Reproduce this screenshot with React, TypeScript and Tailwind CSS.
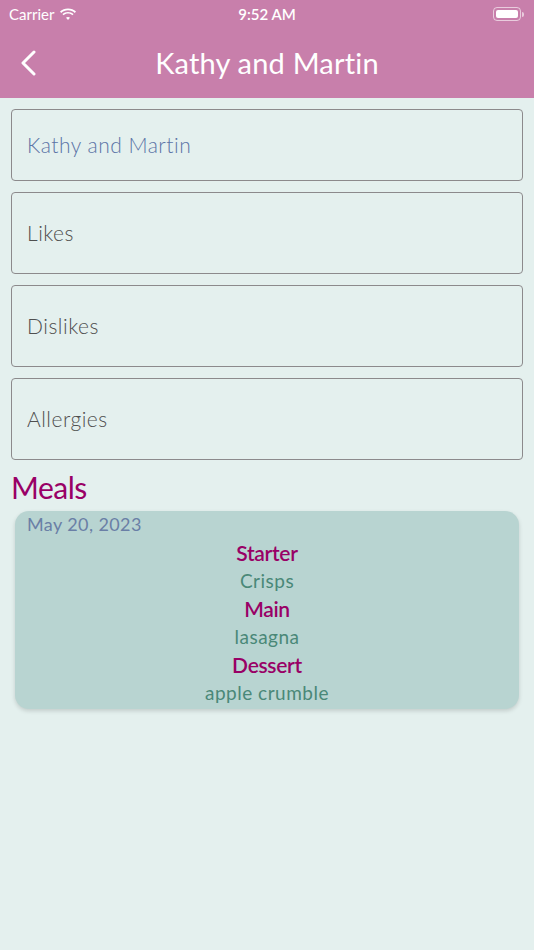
import React from "react";

const fields = [
  { label: "Kathy and Martin", tone: "text-[#5b74a6]", h: "h-[72px]" },
  { label: "Likes", tone: "text-[#4f4f4f]", h: "h-[82px]" },
  { label: "Dislikes", tone: "text-[#4f4f4f]", h: "h-[82px]" },
  { label: "Allergies", tone: "text-[#4f4f4f]", h: "h-[82px]" },
];

const courses = [
  { name: "Starter", dish: "Crisps" },
  { name: "Main", dish: "lasagna" },
  { name: "Dessert", dish: "apple crumble" },
];

function StatusBar() {
  return (
    <div className="h-[28px] flex items-center justify-between px-[9px] text-white">
      <div className="flex items-center gap-[5px] w-[120px]">
        <span className="text-[15px]">Carrier</span>
        <svg width="18" height="13" viewBox="0 0 18 13" fill="white">
          <path d="M9 2.2c2.6 0 5 1 6.8 2.7l1.2-1.3C14.9 1.6 12.1.5 9 .5S3.1 1.6 1 3.6l1.2 1.3C4 3.2 6.4 2.2 9 2.2z" />
          <path d="M9 5.6c1.7 0 3.2.6 4.4 1.7l1.2-1.3C13.1 4.6 11.1 3.9 9 3.9S4.9 4.6 3.4 6l1.2 1.3C5.8 6.2 7.3 5.6 9 5.6z" />
          <path d="M9 9c.8 0 1.5.3 2 .8L9 12 7 9.8c.5-.5 1.2-.8 2-.8z" />
        </svg>
      </div>
      <span className="text-[15px] font-semibold">9:52 AM</span>
      <div className="w-[120px] flex justify-end pr-[1px]">
        <div className="flex items-center">
          <div className="w-[28px] h-[14px] rounded-[4px] border border-white/60 p-[2px]">
            <div className="w-full h-full bg-white rounded-[2px]" />
          </div>
          <div className="w-[2px] h-[5px] bg-white/60 rounded-r-sm ml-[1px]" />
        </div>
      </div>
    </div>
  );
}

export default function App() {
  return (
    <div className="w-[534px] h-[950px] bg-[#e4f0ee] font-['Lato',sans-serif] flex flex-col">
      <div className="bg-[#c87fab]">
        <StatusBar />
        <div className="h-[70px] flex items-center relative">
          <svg className="absolute left-[19px] top-[22px]" width="18" height="26" viewBox="0 0 18 26" fill="none">
            <path d="M15 2 L4 13 L15 24" stroke="white" strokeWidth="3" strokeLinecap="round" strokeLinejoin="round" />
          </svg>
          <h1 className="w-full text-center text-white text-[29px] tracking-[0.2px] -mt-[1px]">Kathy and Martin</h1>
        </div>
      </div>

      <div className="px-[11px] pt-[11px] flex flex-col gap-[11px]">
        {fields.map((f) => (
          <div
            key={f.label}
            className={`${f.h} border border-[#8c8a8c] rounded-[4px] flex items-center px-[15px]`}
          >
            <span className={`${f.tone} text-[21px] font-light tracking-[0.5px]`}>{f.label}</span>
          </div>
        ))}
      </div>

      <h2 className="px-[11px] mt-[9px] text-[30px] leading-[36px] text-[#990066] tracking-[-0.5px]">Meals</h2>

      <div className="mx-[15px] mt-[6px] bg-[#b8d4d1] rounded-[14px] shadow-[0_2px_4px_rgba(0,0,0,0.15)] pt-[2px] pb-[2px]">
        <div className="px-[12px] text-[18px] leading-[22px] text-[#6a7fa6] tracking-[0.4px]">May 20, 2023</div>
        <div className="flex flex-col items-center mt-[4px]">
          {courses.map((c) => (
            <React.Fragment key={c.name}>
              <div className="text-[21px] leading-[28px] font-semibold text-[#990066] tracking-[-0.3px]">{c.name}</div>
              <div className="text-[19px] leading-[28px] text-[#4a8878] tracking-[0.5px]">{c.dish}</div>
            </React.Fragment>
          ))}
        </div>
      </div>
    </div>
  );
}
